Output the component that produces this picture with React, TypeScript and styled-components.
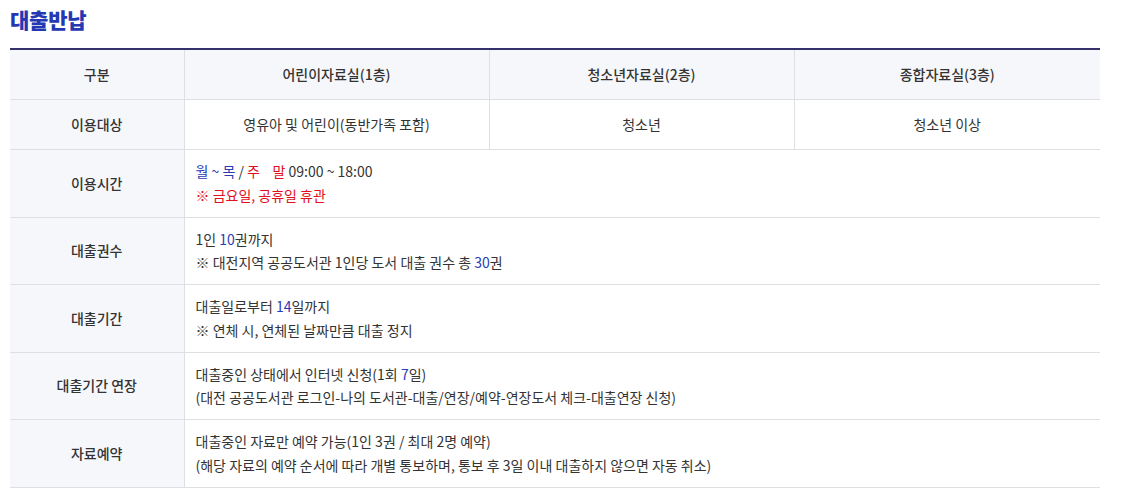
import React from "react";
import styled, { createGlobalStyle } from "styled-components";

const Global = createGlobalStyle`
  body {
    margin: 0;
    background: #fff;
    font-family: "Noto Sans CJK KR", "Noto Sans", sans-serif;
    color: #333;
  }
`;

const Page = styled.div`
  padding: 4px 26px 0 10px;
`;

const Title = styled.h2`
  margin: 0 0 13px;
  font-size: 21px;
  line-height: 31px;
  font-weight: 800;
  color: #2438b4;
  letter-spacing: -0.2px;
`;

const Table = styled.table`
  width: 1090px;
  border-collapse: collapse;
  table-layout: fixed;
  border-top: 2px solid #34316c;
  border-bottom: 1px solid #c9c9cc;
  font-size: 14px;
  line-height: 23.5px;
  letter-spacing: 0;
`;

const Th = styled.th`
  height: 49px;
  padding: 0 10px;
  background: #f6f7fb;
  border: 1px solid #dedfe2;
  border-top: none;
  font-weight: 500;
  color: #333;
  text-align: center;
  &:first-child { border-left: none; }
  &:last-child { border-right: none; }
`;

const RowHead = styled.th`
  background: #f6f7fb;
  border: 1px solid #dedfe2;
  border-left: none;
  font-weight: 500;
  color: #333;
  text-align: center;
  padding: 0 10px;
`;

const Td = styled.td<{ $center?: boolean }>`
  border: 1px solid #dedfe2;
  border-right: none;
  padding: ${(p) => (p.$center ? "12.75px 10px" : "10px 12px 9.5px 11px")};
  text-align: ${(p) => (p.$center ? "center" : "left")};
  color: #333;
  &:not(:last-child) { border-right: 1px solid #dedfe2; }
`;

const Blue = styled.span`
  color: #2a3cb4;
`;

const Red = styled.span`
  color: #e0101e;
`;

const Line = styled.div``;

export default function App() {
  return (
    <>
      <Global />
      <Page>
        <Title>대출반납</Title>
        <Table>
          <colgroup>
            <col style={{ width: 174 }} />
            <col style={{ width: 305 }} />
            <col style={{ width: 305 }} />
            <col />
          </colgroup>
          <thead>
            <tr>
              <Th>구분</Th>
              <Th>어린이자료실(1층)</Th>
              <Th>청소년자료실(2층)</Th>
              <Th>종합자료실(3층)</Th>
            </tr>
          </thead>
          <tbody>
            <tr>
              <RowHead>이용대상</RowHead>
              <Td $center>영유아 및 어린이(동반가족 포함)</Td>
              <Td $center>청소년</Td>
              <Td $center>청소년 이상</Td>
            </tr>
            <tr>
              <RowHead>이용시간</RowHead>
              <Td colSpan={3}>
                <Line>
                  <Blue>월 ~ 목</Blue> / <Red>주{"\u00a0\u00a0\u00a0\u00a0"}말</Red> 09:00 ~ 18:00
                </Line>
                <Line>
                  <Red>※ 금요일, 공휴일 휴관</Red>
                </Line>
              </Td>
            </tr>
            <tr>
              <RowHead>대출권수</RowHead>
              <Td colSpan={3}>
                <Line>
                  1인 <Blue>10</Blue>권까지
                </Line>
                <Line>
                  ※ 대전지역 공공도서관 1인당 도서 대출 권수 총 <Blue>30</Blue>권
                </Line>
              </Td>
            </tr>
            <tr>
              <RowHead>대출기간</RowHead>
              <Td colSpan={3}>
                <Line>
                  대출일로부터 <Blue>14</Blue>일까지
                </Line>
                <Line>※ 연체 시, 연체된 날짜만큼 대출 정지</Line>
              </Td>
            </tr>
            <tr>
              <RowHead>대출기간 연장</RowHead>
              <Td colSpan={3}>
                <Line>
                  대출중인 상태에서 인터넷 신청(1회 <Blue>7</Blue>일)
                </Line>
                <Line>
                  (대전 공공도서관 로그인-나의 도서관-대출/연장/예약-연장도서 체크-대출연장 신청)
                </Line>
              </Td>
            </tr>
            <tr>
              <RowHead>자료예약</RowHead>
              <Td colSpan={3}>
                <Line>대출중인 자료만 예약 가능(1인 3권 / 최대 2명 예약)</Line>
                <Line>
                  (해당 자료의 예약 순서에 따라 개별 통보하며, 통보 후 3일 이내 대출하지 않으면 자동 취소)
                </Line>
              </Td>
            </tr>
          </tbody>
        </Table>
      </Page>
    </>
  );
}
